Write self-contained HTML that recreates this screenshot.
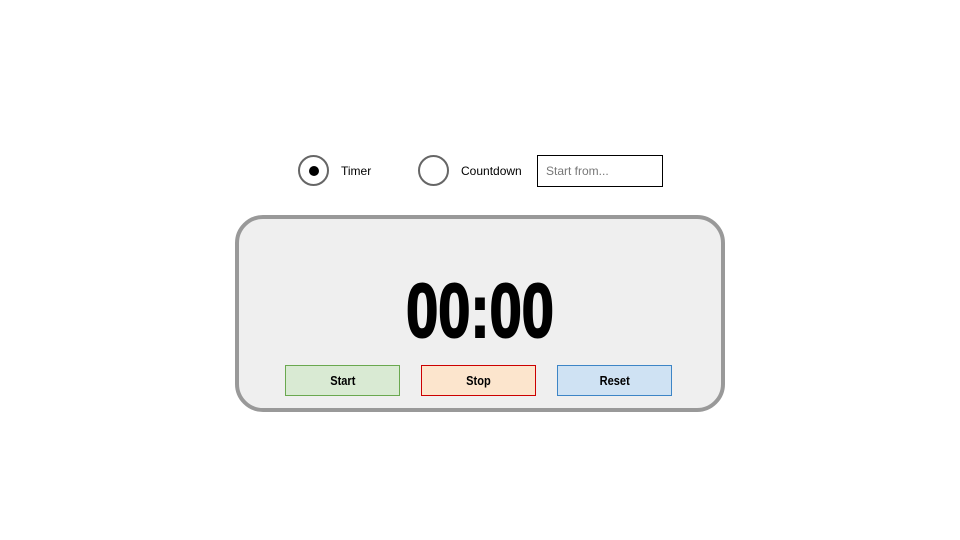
<!DOCTYPE html>
<html><head><style>
body{margin:0;width:960px;height:540px;background:#fff;position:relative;font-family:"Liberation Sans",sans-serif;overflow:hidden}
.abs{position:absolute}
.radio{width:31px;height:31px;border:2px solid #666;border-radius:50%;box-sizing:border-box}
.lbl{font-size:12px;color:#000;line-height:16px}
.panel{left:235px;top:215px;width:490px;height:197px;border:4px solid #999;border-radius:28px;background:#efefef;box-sizing:border-box}
.btn{top:365px;width:115px;height:31px;box-sizing:border-box;border:1px solid;font-weight:bold;font-size:13px;text-align:center;line-height:29px}
.btn span{display:inline-block;transform:scaleX(0.85)}
</style></head><body>
<div class="abs radio" style="left:298px;top:155px"><div class="abs" style="left:8.5px;top:8.5px;width:10px;height:10px;border-radius:50%;background:#000"></div></div>
<div class="abs lbl" style="left:341px;top:163px">Timer</div>
<div class="abs radio" style="left:418px;top:155px"></div>
<div class="abs lbl" style="left:461px;top:163px">Countdown</div>
<div class="abs" style="left:537px;top:155px;width:126px;height:32px;border:1px solid #000;box-sizing:border-box;font-size:12px;color:#777;padding-left:8px;line-height:30px">Start from...</div>
<div class="abs panel"></div>
<div class="abs" style="left:380px;top:270px;width:200px;text-align:center;font-size:76px;font-weight:bold;line-height:84px;transform:scaleX(0.76);-webkit-text-stroke:2px #000">00:00</div>
<div class="abs btn" style="left:285px;background:#d9ead3;border-color:#6aa84f"><span>Start</span></div>
<div class="abs btn" style="left:421px;background:#fce5cd;border-color:#cc0000"><span>Stop</span></div>
<div class="abs btn" style="left:557px;background:#cfe2f3;border-color:#3d85c6"><span>Reset</span></div>
</body></html>
